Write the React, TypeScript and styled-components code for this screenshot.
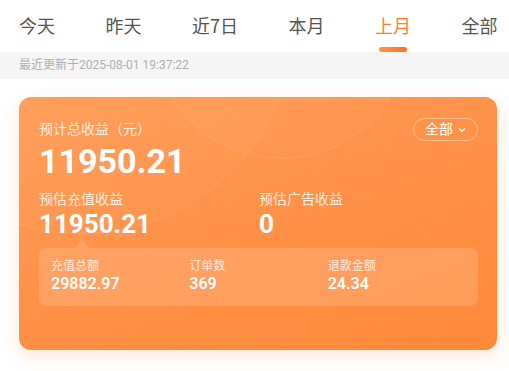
import React, {useState} from 'react';
import styled, {createGlobalStyle} from 'styled-components';

const GlobalStyle = createGlobalStyle`
  html, body {
    margin: 0;
    padding: 0;
    background: #fff;
    font-family: Roboto, "Noto Sans CJK SC", sans-serif;
  }
`

const tabs = ['今天', '昨天', '近7日', '本月', '上月', '全部'];

const stats = [
  {label: '充值总额', value: '29882.97'},
  {label: '订单数', value: '369'},
  {label: '退款金额', value: '24.34'},
];

const App: React.FC = () => {
  const [active, setActive] = useState(4);

  return (
    <Page>
      <GlobalStyle />
      <TabBar>
        {tabs.map((t, i) => (
          <Tab key={t} $active={i === active} onClick={() => setActive(i)}>
            {t}
          </Tab>
        ))}
      </TabBar>
      <UpdateBar>最近更新于2025-08-01 19:37:22</UpdateBar>

      <Card>
        <Ring $x={61} $y={-77} $r={212} />
        <Ring $x={261} $y={-67} $r={127} />
        <CardHead>
          <div>
            <Label>预计总收益（元）</Label>
            <BigNumber>11950.21</BigNumber>
          </div>
          <Pill>
            全部
            <svg width="10" height="10" viewBox="0 0 10 10">
              <path d="M2.5 4 L5 6.3 L7.5 4" fill="none" stroke="#fff" strokeWidth="1.4" strokeLinecap="round" strokeLinejoin="round" />
            </svg>
          </Pill>
        </CardHead>

        <SubRow>
          <div>
            <Label>预估充值收益</Label>
            <MidNumber>11950.21</MidNumber>
          </div>
          <div>
            <Label>预估广告收益</Label>
            <MidNumber>0</MidNumber>
          </div>
        </SubRow>

        <StatBox>
          {stats.map(s => (
            <Stat key={s.label}>
              <StatLabel>{s.label}</StatLabel>
              <StatValue>{s.value}</StatValue>
            </Stat>
          ))}
        </StatBox>
      </Card>
    </Page>
  )
}

const Page = styled.div`
  width: 509px;
  height: 371px;
  overflow: hidden;
  background: #fff;
`

const TabBar = styled.div`
  display: flex;
  gap: 50.5px;
  padding-left: 19px;
  height: 52px;
  white-space: nowrap;
`

const Tab = styled.div<{$active: boolean}>`
  position: relative;
  font-family: "Noto Sans CJK SC", Roboto, sans-serif;
  font-size: 18px;
  line-height: 51px;
  height: 52px;
  color: ${p => p.$active ? '#ff7d2e' : '#555'};
  cursor: pointer;

  &::after {
    content: '';
    display: ${p => p.$active ? 'block' : 'none'};
    position: absolute;
    left: 50%;
    bottom: 0;
    transform: translateX(-50%);
    width: 28px;
    height: 5px;
    border-radius: 3px;
    background: linear-gradient(90deg, #ff9650, #ff6e22);
  }
`

const UpdateBar = styled.div`
  height: 27px;
  line-height: 27px;
  padding-left: 19px;
  background: #f5f5f5;
  font-size: 12px;
  color: #b0b0b0;
`

const Card = styled.div`
  position: relative;
  overflow: hidden;
  margin: 18px 12px 0 19px;
  height: 253px;
  box-sizing: border-box;
  padding: 22px 19px 0 20px;
  border-radius: 12px;
  background: linear-gradient(160deg, #ff9d58 0%, #ff9148 50%, #ff893a 100%);
  box-shadow: 0 6px 18px rgba(255, 140, 70, 0.22);
  color: #fff;
`

const Ring = styled.div<{$x: number; $y: number; $r: number}>`
  position: absolute;
  left: ${p => p.$x - p.$r}px;
  top: ${p => p.$y - p.$r}px;
  width: ${p => p.$r * 2}px;
  height: ${p => p.$r * 2}px;
  border-radius: 50%;
  border: 1px solid rgba(255, 255, 255, 0.09);
  background: rgba(255, 255, 255, 0.025);
  pointer-events: none;
`

const CardHead = styled.div`
  position: relative;
  display: flex;
  justify-content: space-between;
  align-items: flex-start;
`

const Label = styled.div`
  font-size: 14px;
  line-height: 20px;
  color: rgba(255, 255, 255, 0.85);
`

const BigNumber = styled.div`
  font-size: 34px;
  font-weight: 700;
  line-height: 40px;
  margin-top: 2px;
`

const Pill = styled.div`
  display: flex;
  align-items: center;
  gap: 4px;
  height: 23px;
  box-sizing: border-box;
  margin-top: -1px;
  padding: 0 10px 0 11px;
  border: 1px solid rgba(255, 255, 255, 0.4);
  border-radius: 12px;
  font-size: 14px;
  line-height: 21px;
`

const SubRow = styled.div`
  position: relative;
  display: grid;
  grid-template-columns: 220px 1fr;
  margin-top: 8px;
`

const MidNumber = styled.div`
  font-size: 26px;
  font-weight: 700;
  line-height: 30px;
`

const StatBox = styled.div`
  position: relative;
  display: grid;
  grid-template-columns: repeat(3, 1fr);
  margin-top: 9px;
  height: 58px;
  box-sizing: border-box;
  padding: 10px 12px 0;
  border-radius: 8px;
  background: rgba(255, 255, 255, 0.15);

  &::before {
    content: '';
    position: absolute;
    left: 36px;
    top: -9px;
    border-left: 7px solid transparent;
    border-right: 7px solid transparent;
    border-bottom: 9px solid rgba(255, 255, 255, 0.15);
  }
`

const Stat = styled.div`
  display: flex;
  flex-direction: column;
`

const StatLabel = styled.div`
  font-size: 12px;
  line-height: 16px;
  color: rgba(255, 255, 255, 0.8);
`

const StatValue = styled.div`
  font-size: 16px;
  font-weight: 600;
  line-height: 20px;
`

export default App;
